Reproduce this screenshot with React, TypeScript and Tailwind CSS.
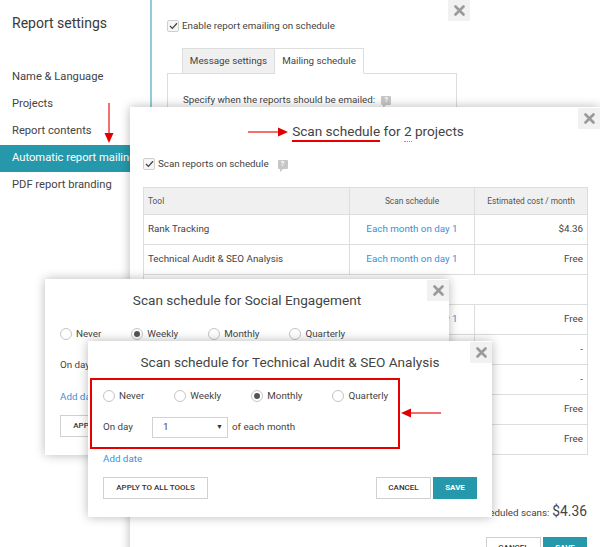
import React from "react";

const menuItems = [
    "Name & Language",
    "Projects",
    "Report contents",
    "Automatic report mailing",
    "PDF report branding",
];

const tableRows: { tool: string; schedule: string; cost: string; group?: boolean }[] = [
    { tool: "Rank Tracking", schedule: "Each month on day 1", cost: "$4.36" },
    { tool: "Technical Audit & SEO Analysis", schedule: "Each month on day 1", cost: "Free" },
    { tool: "", schedule: "", cost: "", group: true },
    { tool: "Social Engagement", schedule: "Each month on day 1", cost: "Free" },
    { tool: "Rank Tracking", schedule: "Never", cost: "-" },
    { tool: "Technical Audit & SEO Analysis", schedule: "Never", cost: "-" },
    { tool: "Social Engagement", schedule: "Each month on day 1", cost: "Free" },
    { tool: "Backlink Monitoring", schedule: "Each month on day 1", cost: "Free" },
];

const options = ["Never", "Weekly", "Monthly", "Quarterly"];

function CloseButton({ className = "" }: { className?: string }) {
    return (
        <div className={`flex h-[21px] w-[22px] items-center justify-center bg-[#f1f1f1] ${className}`}>
            <svg width="11" height="11" viewBox="0 0 11 11">
                <path d="M1.5 1.5 L9.5 9.5 M9.5 1.5 L1.5 9.5" stroke="#9a9a9a" strokeWidth="2.6" strokeLinecap="round" />
            </svg>
        </div>
    );
}

function Checkbox() {
    return (
        <span className="flex h-[12px] w-[12px] shrink-0 items-center justify-center rounded-[2px] border border-[#cfcfcf] bg-[#f6f6f6]">
            <svg width="9" height="8" viewBox="0 0 9 8">
                <path d="M1 4 L3.4 6.4 L8 1.3" fill="none" stroke="#444" strokeWidth="1.3" />
            </svg>
        </span>
    );
}

function HelpIcon() {
    return (
        <span className="relative ml-[6px] inline-flex h-[9px] w-[10px] items-center justify-center rounded-[1px] bg-[#c6c6c6] text-[7px] font-bold leading-none text-white">
            ?
            <span className="absolute bottom-[-3px] left-[2px] h-0 w-0 border-t-[3px] border-r-[3px] border-t-[#c6c6c6] border-r-transparent" />
        </span>
    );
}

function Radio({ label, checked }: { label: string; checked: boolean }) {
    return (
        <label className="flex items-center gap-[4px]">
            <span className="flex h-[12px] w-[12px] items-center justify-center rounded-full border border-[#c4c4c4] bg-white">
                {checked ? <span className="h-[6px] w-[6px] rounded-full bg-[#555]" /> : null}
            </span>
            <span>{label}</span>
        </label>
    );
}

function ScheduleDialog({
    title,
    selected,
    className,
    highlight,
}: {
    title: string;
    selected: string;
    className: string;
    highlight?: boolean;
}) {
    return (
        <div className={`absolute w-[404px] bg-white px-[15px] text-[9.8px] text-[#444] shadow-[0_0_10px_rgba(0,0,0,0.28)] ${className}`}>
            <CloseButton className="absolute right-0 top-[1px]" />
            <h2 className="pt-[11px] text-center text-[13.6px] leading-[20px] text-[#444]">{title}</h2>

            <div className="mt-[17px] flex h-[14px] items-center gap-[30px]">
                {options.map((option) => (
                    <Radio key={option} label={option} checked={option === selected} />
                ))}
            </div>

            <div className="mt-[14px] flex items-center">
                <span className="w-[49px]">On day</span>
                <div className="flex h-[21px] w-[76px] items-center justify-between border border-[#d2d2d2] pl-[10px] pr-[4px]">
                    <span>1</span>
                    <span className="text-[7px] text-[#333]">▼</span>
                </div>
                <span className="ml-[4px]">of each month</span>
            </div>

            <div className="mt-[14px] text-[9.8px] leading-[14px] text-[#3a8fd8]">Add date</div>

            <div className="mt-[11px] flex items-center justify-between pb-[18px]">
                <button className="h-[22px] w-[105px] border border-[#d0d0d0] bg-white text-[8px] font-medium text-[#333]">
                    APPLY TO ALL TOOLS
                </button>
                <div className="flex gap-[2px]">
                    <button className="h-[22px] w-[55px] border border-[#d0d0d0] bg-white text-[8px] font-medium text-[#333]">
                        CANCEL
                    </button>
                    <button className="h-[22px] w-[44px] bg-[#2599ab] text-[8px] font-bold text-white">SAVE</button>
                </div>
            </div>

            {highlight ? (
                <div className="absolute left-[2px] top-[37px] h-[71px] w-[310px] border-2 border-[#e60000]" />
            ) : null}
        </div>
    );
}

function Arrow({ className, direction }: { className: string; direction: "down" | "right" | "left" }) {
    if (direction === "down") {
        return (
            <svg className={`absolute ${className}`} width="10" height="40" viewBox="0 0 10 40">
                <line x1="5" y1="0" x2="5" y2="31" stroke="#f04040" strokeWidth="1.5" />
                <path d="M0.5 30 L9.5 30 L5 40 Z" fill="#e00000" />
            </svg>
        );
    }
    if (direction === "right") {
        return (
            <svg className={`absolute ${className}`} width="40" height="10" viewBox="0 0 40 10">
                <line x1="0" y1="5" x2="31" y2="5" stroke="#f04040" strokeWidth="1.5" />
                <path d="M30 0.5 L30 9.5 L40 5 Z" fill="#e00000" />
            </svg>
        );
    }
    return (
        <svg className={`absolute ${className}`} width="40" height="10" viewBox="0 0 40 10">
            <line x1="9" y1="5" x2="40" y2="5" stroke="#f04040" strokeWidth="1.5" />
            <path d="M10 0.5 L10 9.5 L0 5 Z" fill="#e00000" />
        </svg>
    );
}

export default function App() {
    return (
        <div className="relative h-[547px] w-[600px] overflow-hidden bg-white font-[Roboto,'Liberation_Sans',sans-serif] text-[#444]">
            {/* settings page behind the dialogs */}
            <div className="flex h-full">
                <aside className="w-[150px] shrink-0 pt-[12px]">
                    <h1 className="pl-[12px] text-[14px] leading-[22px] text-[#3a3a3a]">Report settings</h1>
                    <nav className="mt-[30px]">
                        {menuItems.map((item) => (
                            <div
                                key={item}
                                className={`flex h-[27px] items-center whitespace-nowrap pl-[12px] text-[11.2px] ${
                                    item === "Automatic report mailing" ? "bg-[#2599ab] text-white" : "text-[#444]"
                                }`}
                            >
                                {item}
                            </div>
                        ))}
                    </nav>
                </aside>
                <div className="w-[2px] shrink-0 bg-[#8dcfd8]" />
                <main className="relative flex-1 pl-[15px] pt-[20px]">
                    <CloseButton className="absolute left-[296px] top-0" />
                    <div className="flex items-center gap-[3px] text-[9.8px] leading-[12px]">
                        <Checkbox />
                        <span>Enable report emailing on schedule</span>
                    </div>
                    <div className="mt-[16px] w-[290px]">
                        <div className="relative z-10 -mb-px ml-[15px] flex text-[9.8px]">
                            <div className="flex h-[26px] w-[93px] items-center justify-center border border-[#ddd] bg-[#f0f0f0] text-[#444]">
                                Message settings
                            </div>
                            <div className="flex h-[26px] w-[89px] items-center justify-center border border-l-0 border-b-white border-[#ddd] bg-white">
                                Mailing schedule
                            </div>
                        </div>
                        <div className="h-[120px] border border-[#ddd] pl-[15px] pt-[18px] text-[9.8px] leading-[16px]">
                            <span className="inline-flex items-center">
                                Specify when the reports should be emailed:
                                <HelpIcon />
                            </span>
                        </div>
                    </div>
                </main>
            </div>

            <Arrow direction="down" className="left-[104px] top-[103px]" />

            {/* scan schedule for projects */}
            <div className="absolute left-[130px] top-[107px] h-[460px] w-[470px] bg-white px-[13px] shadow-[0_0_10px_rgba(0,0,0,0.28)]">
                <CloseButton className="absolute right-0 top-[1px]" />
                <h2 className="flex justify-center pl-[26px] pt-[15px] text-[13.6px] leading-[20px] text-[#444]">
                    <span className="border-b-2 border-[#e60000] leading-[18px]">Scan schedule</span>
                    <span className="whitespace-pre leading-[18px]"> for </span>
                    <span className="border-b border-dotted border-[#999] leading-[18px]">2</span>
                    <span className="whitespace-pre leading-[18px]"> projects</span>
                </h2>
                <div className="mt-[15px] flex items-center gap-[3px] text-[9.8px] leading-[14px]">
                    <Checkbox />
                    <span>Scan reports on schedule</span>
                    <HelpIcon />
                </div>
                <table className="mt-[16px] w-[444px] table-fixed border-collapse text-[9.8px]">
                    <colgroup>
                        <col className="w-[206px]" />
                        <col className="w-[125px]" />
                        <col className="w-[113px]" />
                    </colgroup>
                    <thead>
                        <tr className="h-[27px] bg-[#f0f0f0] text-[8.4px] text-[#555]">
                            <th className="border border-[#ddd] pl-[4px] text-left font-normal">Tool</th>
                            <th className="border border-[#ddd] text-center font-normal">Scan schedule</th>
                            <th className="border border-[#ddd] text-center font-normal">Estimated cost / month</th>
                        </tr>
                    </thead>
                    <tbody>
                        {tableRows.map((row, index) =>
                            row.group ? (
                                <tr key={index} className="h-[30px]">
                                    <td colSpan={3} className="border border-[#ddd] pl-[4px]">
                                        {row.tool}
                                    </td>
                                </tr>
                            ) : (
                                <tr key={index} className="h-[30px]">
                                    <td className="border border-[#ddd] pl-[4px]">{row.tool}</td>
                                    <td className="border border-[#ddd] text-center text-[#3a8fd8]">{row.schedule}</td>
                                    <td className="border border-[#ddd] pr-[4px] text-right">{row.cost}</td>
                                </tr>
                            )
                        )}
                    </tbody>
                </table>
                <div className="mt-[45px] flex items-baseline justify-end gap-[3px] text-[9.8px] leading-[22px]">
                    <span>Total cost of scheduled scans:</span>
                    <span className="text-[13.8px]">$4.36</span>
                </div>
                <div className="mt-[13px] flex justify-end gap-[2px]">
                    <button className="h-[22px] w-[55px] border border-[#d0d0d0] bg-white text-[8px] font-medium text-[#333]">
                        CANCEL
                    </button>
                    <button className="h-[22px] w-[44px] bg-[#2599ab] text-[8px] font-bold text-white">SAVE</button>
                </div>
            </div>

            <Arrow direction="right" className="left-[248px] top-[127px]" />

            <ScheduleDialog
                title="Scan schedule for Social Engagement"
                selected="Weekly"
                className="left-[45px] top-[279px]"
            />
            <ScheduleDialog
                title="Scan schedule for Technical Audit & SEO Analysis"
                selected="Monthly"
                className="left-[88px] top-[341px]"
                highlight
            />

            <Arrow direction="left" className="left-[401px] top-[408px]" />
        </div>
    );
}
